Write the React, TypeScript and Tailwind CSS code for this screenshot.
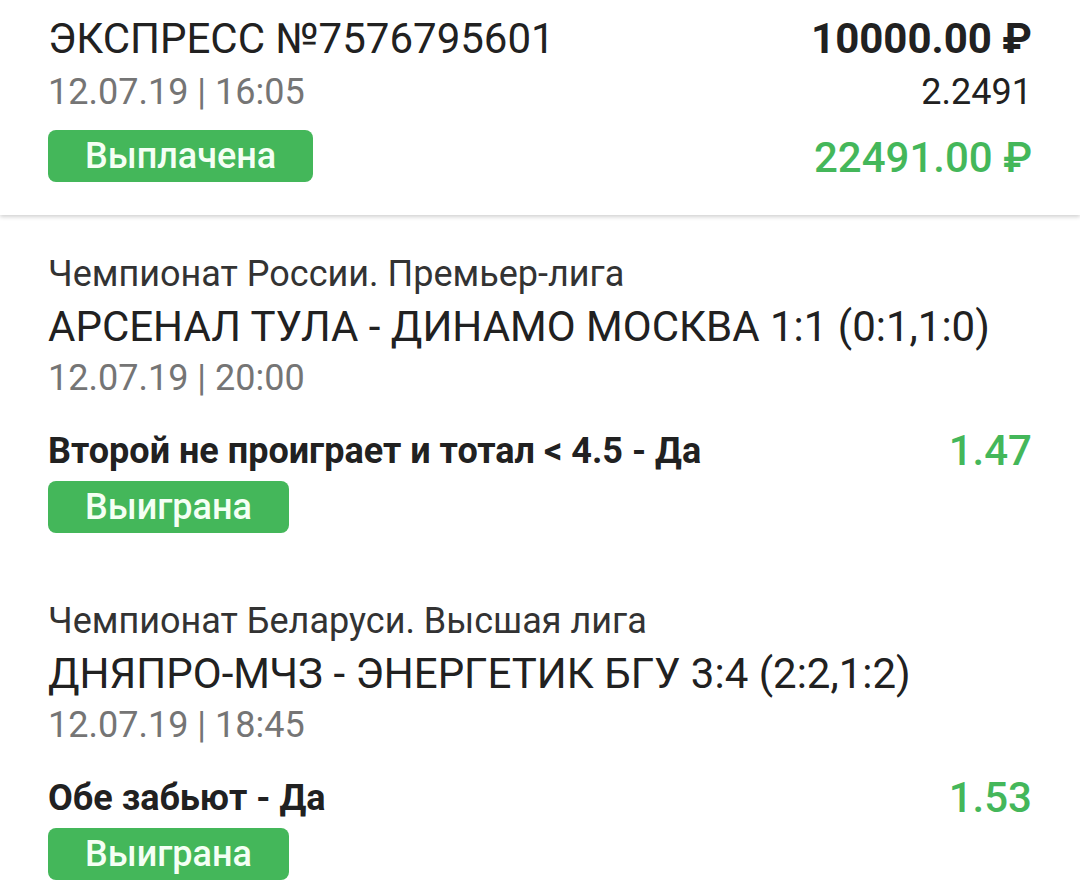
import React from "react";

/* ─── Bet data ─── */
interface Leg {
  league: string;
  match: string;
  date: string;
  pick: string;
  odd: string;
  status: string;
}

const LEGS: Leg[] = [
  {
    league: "Чемпионат России. Премьер-лига",
    match: "АРСЕНАЛ ТУЛА - ДИНАМО МОСКВА 1:1 (0:1,1:0)",
    date: "12.07.19 | 20:00",
    pick: "Второй не проиграет и тотал < 4.5 - Да",
    odd: "1.47",
    status: "Выиграна",
  },
  {
    league: "Чемпионат Беларуси. Высшая лига",
    match: "ДНЯПРО-МЧЗ - ЭНЕРГЕТИК БГУ 3:4 (2:2,1:2)",
    date: "12.07.19 | 18:45",
    pick: "Обе забьют - Да",
    odd: "1.53",
    status: "Выиграна",
  },
];

function Badge({ label }: { label: string }) {
  return (
    <div className="inline-flex h-[52px] items-center rounded-[8px] bg-[#44b75a] px-[37px] text-[36px] font-medium leading-none text-[#f4fff4]">
      {label}
    </div>
  );
}

export default function App() {
  return (
    <div className="min-h-screen w-full bg-white text-[#212121]" style={{ fontFamily: "Roboto, 'Noto Sans', sans-serif" }}>
      {/* ─── HEADER ─── */}
      <header className="relative flex justify-between px-12 pt-[13px] pb-[31px] shadow-[0_2px_4px_rgba(0,0,0,0.18)]">
        <div className="flex flex-col items-start">
          <p className="text-[42px] leading-[52px] text-[#212121]">ЭКСПРЕСС №7576795601</p>
          <p className="mt-[5px] text-[36px] leading-[44px] text-[#757575]">12.07.19 | 16:05</p>
          <div className="mt-[16px]">
            <Badge label="Выплачена" />
          </div>
        </div>
        <div className="flex flex-col items-end">
          <p className="text-[42px] font-bold leading-[52px] text-[#212121]">10000.00 ₽</p>
          <p className="mt-[5px] text-[36px] leading-[44px] text-[#212121]">2.2491</p>
          <p className="mt-[18px] text-[42px] font-medium leading-[52px] text-[#44b75a]">22491.00 ₽</p>
        </div>
      </header>

      {/* ─── LEGS ─── */}
      <div className="flex flex-col gap-[66px] px-12 pt-[37px]">
        {LEGS.map((leg) => (
          <div key={leg.match} className="flex flex-col items-start">
            <p className="text-[36px] leading-[44px] text-[#333333]">{leg.league}</p>
            <p className="mt-[5px] text-[42px] leading-[52px] text-[#212121]">{leg.match}</p>
            <p className="mt-[3px] text-[36px] leading-[44px] text-[#757575]">{leg.date}</p>
            <div className="mt-[29px] flex w-full items-center justify-between">
              <p className="text-[36px] font-bold leading-[44px] text-[#212121]">{leg.pick}</p>
              <p className="text-[42px] font-medium leading-[44px] text-[#44b75a]">{leg.odd}</p>
            </div>
            <div className="mt-[8px]">
              <Badge label={leg.status} />
            </div>
          </div>
        ))}
      </div>
    </div>
  );
}
